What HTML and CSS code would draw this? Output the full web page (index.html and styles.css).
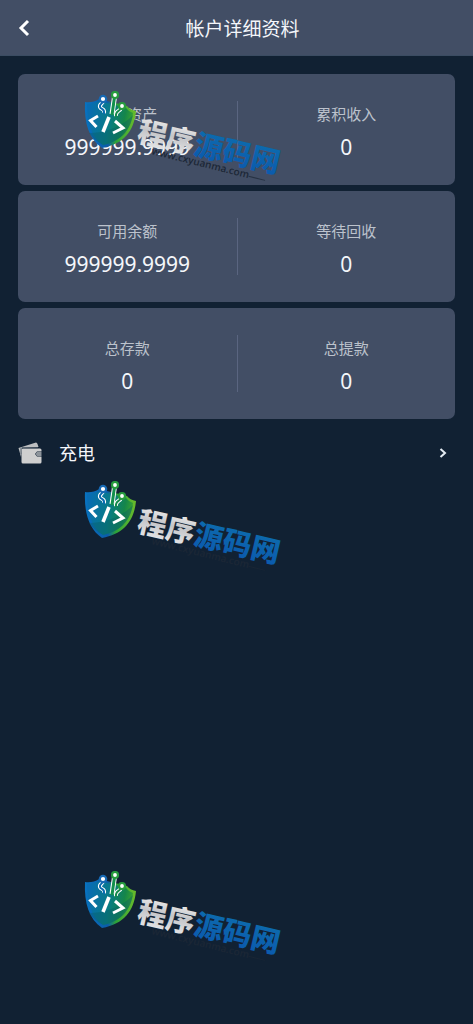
FILE: index.html
```
<!DOCTYPE html>
<html lang="zh-CN">
<head>
    <meta charset="UTF-8">
    <meta name="viewport" content="width=device-width, initial-scale=1.0">
    <title>帐户详细资料</title>
    <link rel="stylesheet" href="styles.css">
</head>
<body>

<header class="header">
    <button type="button" class="back" aria-label="返回" onclick="history.back()">
        <svg width="12" height="18" viewBox="0 0 12 18"><path d="M10 2 L3 9 L10 16" fill="none" stroke="#fff" stroke-width="3"/></svg>
    </button>
    <h1>帐户详细资料</h1>
</header>

<main class="content">
    <section class="card">
        <div class="item">
            <span class="label">帐户资产</span>
            <span class="value">999999.9999</span>
        </div>
        <div class="item">
            <span class="label">累积收入</span>
            <span class="value">0</span>
        </div>
    </section>
    <section class="card">
        <div class="item">
            <span class="label">可用余额</span>
            <span class="value">999999.9999</span>
        </div>
        <div class="item">
            <span class="label">等待回收</span>
            <span class="value">0</span>
        </div>
    </section>
    <section class="card">
        <div class="item">
            <span class="label">总存款</span>
            <span class="value">0</span>
        </div>
        <div class="item">
            <span class="label">总提款</span>
            <span class="value">0</span>
        </div>
    </section>

    <a href="#" class="menu-link">
        <svg class="wallet" width="24" height="22" viewBox="0 0 24 22">
            <path d="M0.500 6 L18 0.500 Q19 0.500 19.500 2 L20.500 5 L4 5.500 L3 15 Z" fill="#bdbfc1"/>
            <path d="M5 6.500 H22 Q23.500 6.500 23.500 8 V9.500 H19 L17 12 L19 14.500 H23.500 V20 Q23.500 21.500 22 21.500 H5 Q3.500 21.500 3.500 20 V8 Q3.500 6.500 5 6.500 Z" fill="#cfcfcf"/>
            <path d="M3.500 6 H20 M3 6 V12" fill="none" stroke="#5c6874" stroke-width="1"/>
            <path d="M19 10 H23.500 V14 H19 L17.500 12 Z" fill="#8d949b"/>
        </svg>
        <span class="menu-text">充电</span>
        <svg width="8" height="10" viewBox="0 0 8 10"><path d="M1.500 1 L6 5 L1.500 9" fill="none" stroke="#e4ebf2" stroke-width="2"/></svg>
    </a>
</main>

<!-- site logo, repeated down the page -->
<div class="watermarks" aria-hidden="true">
    <svg class="watermark" viewBox="0 0 204 100">
        <defs>
            <linearGradient id="shield" x1="0" y1="0.3" x2="1" y2="0.5">
                <stop offset="0" stop-color="#086cb4"/>
                <stop offset="0.5" stop-color="#087c85"/>
                <stop offset="0.8" stop-color="#158649"/>
                <stop offset="1" stop-color="#3da52e"/>
            </linearGradient>
            <linearGradient id="rim" x1="0" y1="0" x2="1" y2="0">
                <stop offset="0" stop-color="#0872bf"/>
                <stop offset="0.45" stop-color="#0b5ca9"/>
                <stop offset="0.6" stop-color="#2ba13a"/>
                <stop offset="1" stop-color="#6abc2b"/>
            </linearGradient>
            <linearGradient id="silver" x1="0" y1="0" x2="0" y2="1">
                <stop offset="0" stop-color="#ffffff"/>
                <stop offset="0.5" stop-color="#c4c5c8"/>
                <stop offset="1" stop-color="#eeeeef"/>
            </linearGradient>
            <linearGradient id="blue" x1="0" y1="0" x2="0" y2="1">
                <stop offset="0" stop-color="#0d6fae"/>
                <stop offset="1" stop-color="#0b58ad"/>
            </linearGradient>
            <g id="logo">
                <path d="M1 11 Q9 12 15 8 L43 15 Q46 19 52 20 C50 40 40 53 18 57 C5 48 0 32 1 11 Z" fill="url(#rim)"/>
                <path d="M3 13 Q10 13 16 10 L42 17 Q45 21 49 22 C47 38 38 50 19 54 C7 46 3 31 3 13 Z" fill="url(#shield)"/>
                <path d="M5 42 C20 42 38 36 49 24 C46 39 38 50 19 54 C12 50 8 46 5 42 Z" fill="#075c66" opacity="0.400"/>
                <g fill="none" stroke="#fff" stroke-width="4">
                    <path d="M19 10 C19 13 15 13 16 16 C17 19 21 17 20 22"/>
                    <path d="M30.500 6 L28 23" stroke-width="5"/>
                    <path d="M37 17 C36 21 31 19 32 25"/>
                </g>
                <path d="M19 10 C19 13 15 13 16 16 C17 19 21 17 20 23" fill="none" stroke="#0b6bb0" stroke-width="2"/>
                <path d="M30.500 6 L28 24" fill="none" stroke="#118f4c" stroke-width="3"/>
                <path d="M37 17 C36 21 31 19 32 26" fill="none" stroke="#158a4a" stroke-width="2"/>
                <circle cx="19" cy="8" r="3.200" fill="#fff" stroke="#1769b3" stroke-width="2.200"/>
                <circle cx="31" cy="4" r="3" fill="#fff" stroke="#269b3d" stroke-width="2.200"/>
                <circle cx="38" cy="15" r="3" fill="#fff" stroke="#269b3d" stroke-width="2.200"/>
                <path d="M14 25 L6.500 29.500 L12.500 36" fill="none" stroke="#fff" stroke-width="3"/>
                <path d="M25 26 L19 41" fill="none" stroke="#fff" stroke-width="3.600"/>
                <path d="M31 30 L39 37 L29 42" fill="none" stroke="#fff" stroke-width="3"/>
                <g transform="translate(67 63) rotate(14)">
                    <text class="logo-url" x="0" y="0">www.cxyuanma.com</text>
                    <path d="M100 -2 H117" stroke="#1c2736" stroke-width="1" opacity="0.700"/>
                </g>
                <g transform="translate(52 50) rotate(13)">
                    <text class="logo-name" x="0" y="0"><tspan fill="url(#silver)">程序</tspan><tspan fill="url(#blue)">源码网</tspan></text>
                </g>
            </g>
        </defs>
        <use href="#logo"/>
    </svg>
    <svg class="watermark" viewBox="0 0 204 100"><use href="#logo"/></svg>
    <svg class="watermark" viewBox="0 0 204 100"><use href="#logo"/></svg>
</div>

</body>
</html>
```
FILE: styles.css
```
* {
    box-sizing: border-box;
}
body {
    position: relative;
    min-height: 100vh;
    margin: 0;
    font-family: "Noto Sans", "Noto Sans CJK SC", sans-serif;
    background-color: #112133; /* Navy */
    color: #f4f6fa;
}

/* Top bar */
.header {
    display: grid;
    grid-template-columns: 48px 1fr 36px;
    align-items: center;
    height: 56px;
    background-color: #424e65;
    border-bottom: 1px solid #3b4c62;
}
.header h1 {
    margin: 0;
    padding-top: 2px;
    font-size: 19px;
    line-height: 28px;
    font-weight: normal;
    text-align: center;
}
.back {
    display: flex;
    align-items: center;
    height: 55px;
    padding: 0 18px;
    border: none;
    background: none;
    cursor: pointer;
}

/* Balance cards */
.content {
    display: flex;
    flex-direction: column;
    gap: 6px;
    padding: 18px;
}
.card {
    display: grid;
    grid-template-columns: 1fr 1fr;
    padding: 27px 0;
    background-color: #424e65;
    border-radius: 7px;
}
.item {
    display: flex;
    flex-direction: column;
    gap: 11px;
    padding-top: 2px;
    text-align: center;
}
.item + .item {
    border-left: 1px solid #5a6580;
}
.label {
    font-size: 15px;
    line-height: 22px;
    color: #bcc2cc;
}
.value {
    font-size: 21px;
    line-height: 22px;
}

/* Menu row */
.menu-link {
    display: flex;
    align-items: center;
    height: 56px;
    padding-right: 8px;
    color: #f4f6fa;
    text-decoration: none;
}
.menu-text {
    flex: 1;
    padding-left: 17px;
    font-size: 18px;
    line-height: 28px;
}

/* Logo overlay */
.watermarks {
    position: absolute;
    top: 91px;
    left: 84px;
    display: grid;
    gap: 290px;
    pointer-events: none;
}
.watermark {
    display: block;
    width: 204px;
    height: 100px;
}
.logo-name {
    font-family: "Noto Sans CJK SC", sans-serif;
    font-size: 29px;
    font-weight: 900;
}
.logo-url {
    font-family: "Open Sans", sans-serif;
    font-size: 10px;
    font-weight: 600;
    fill: #1c2736;
}
```
